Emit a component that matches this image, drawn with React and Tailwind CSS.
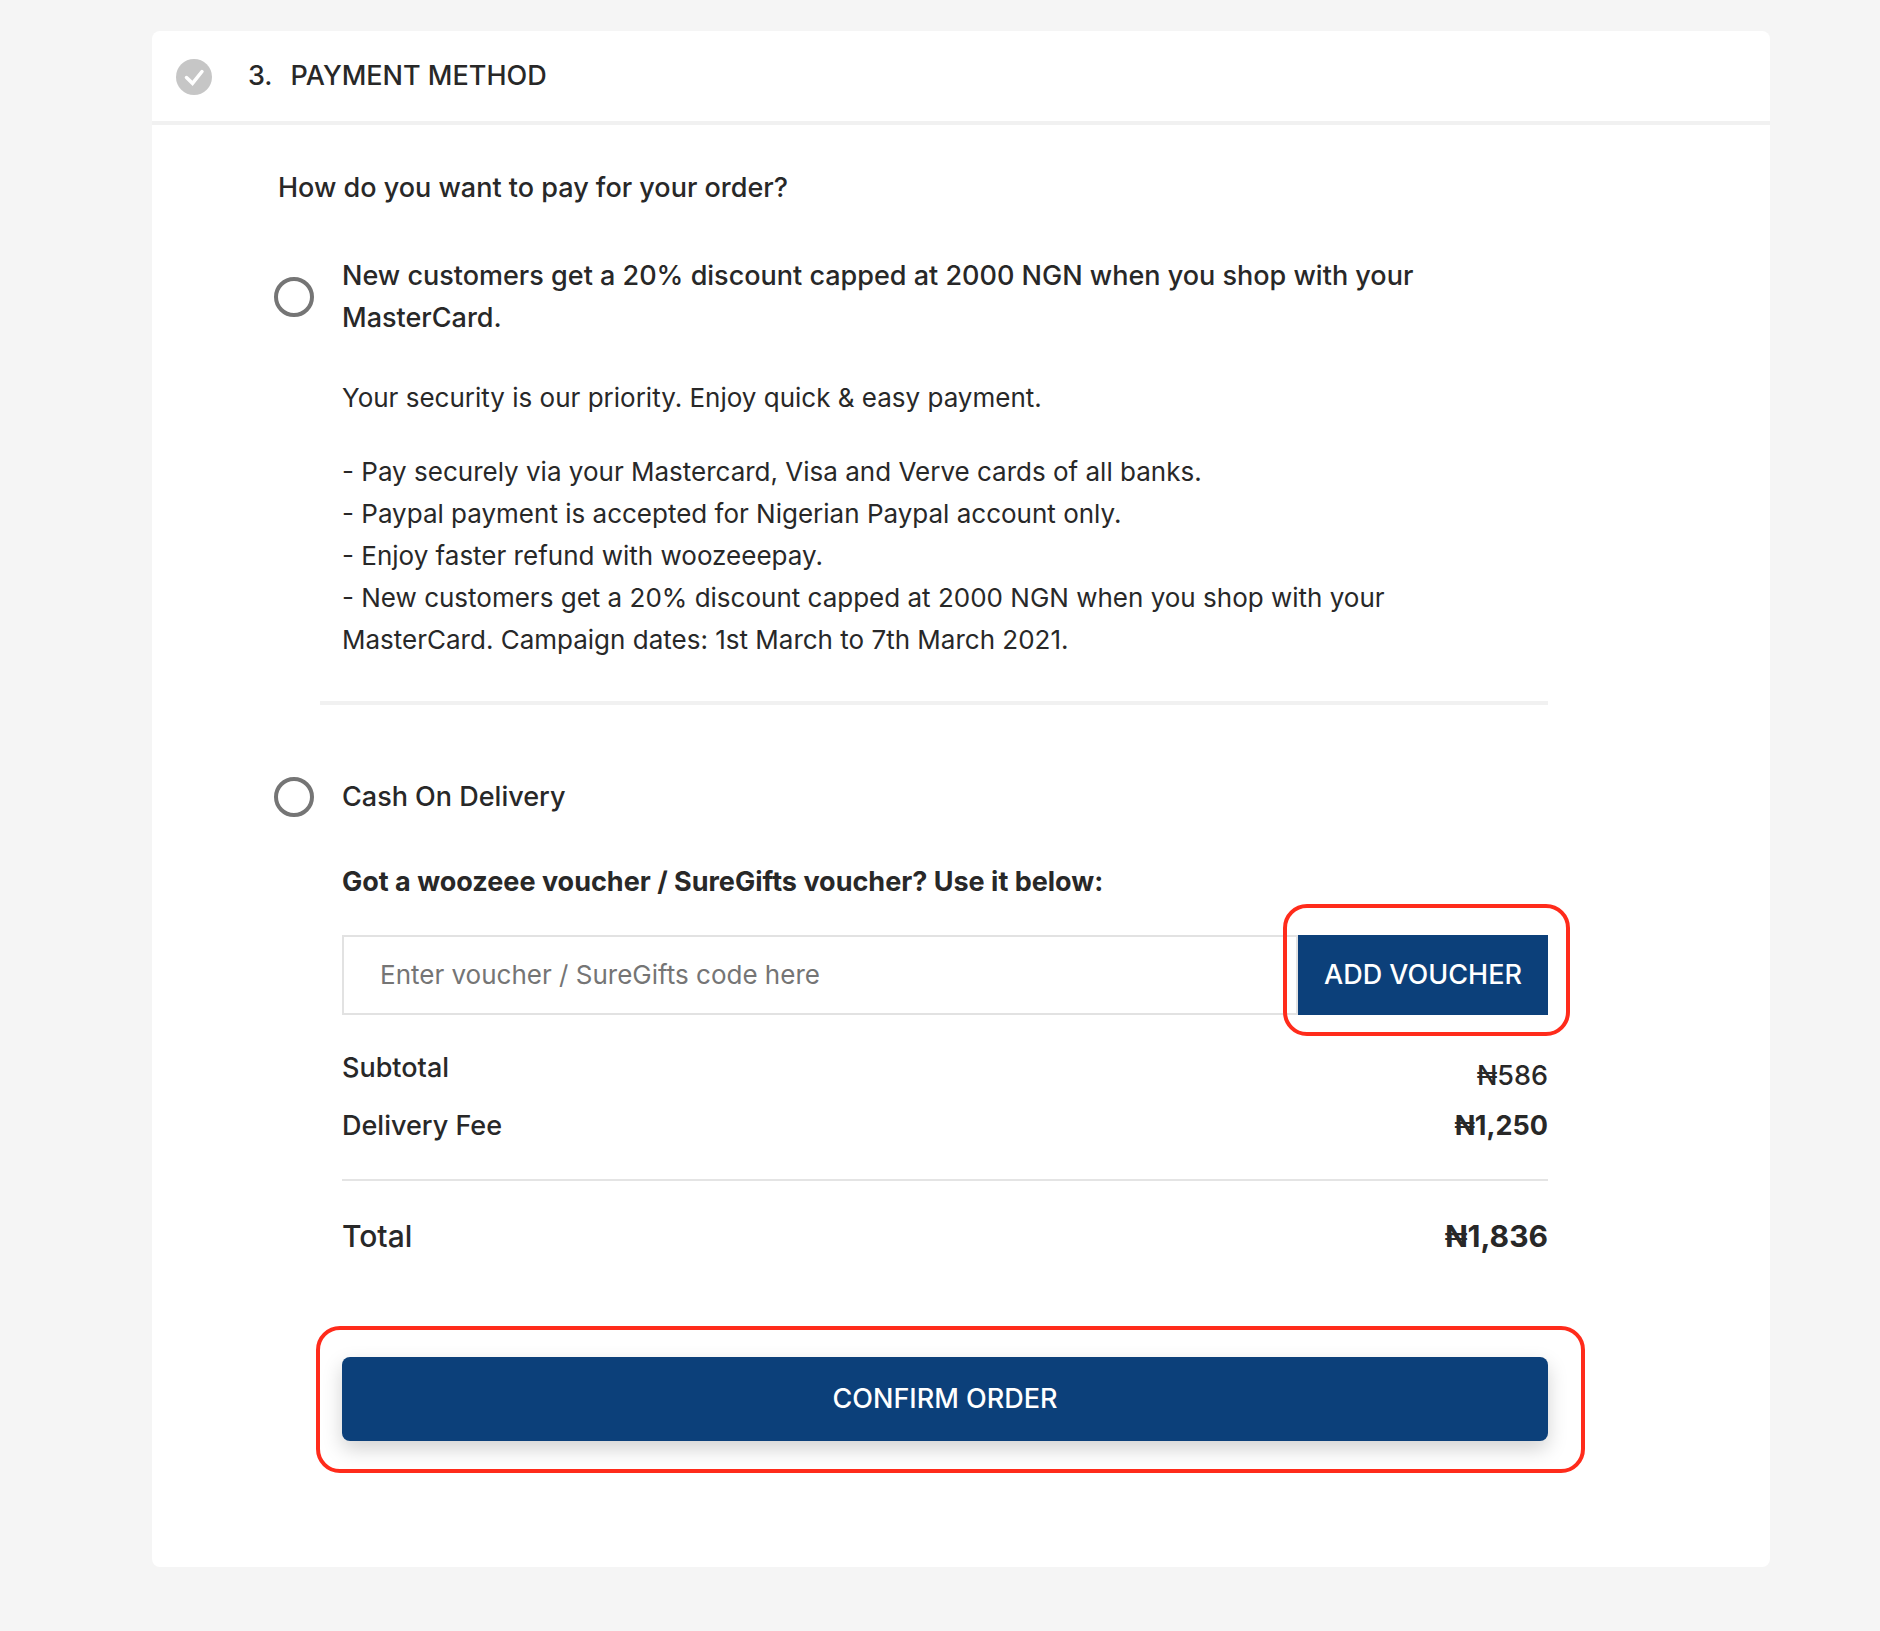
import React from "react";

const CARD_NOTES = [
  "- Pay securely via your Mastercard, Visa and Verve cards of all banks.",
  "- Paypal payment is accepted for Nigerian Paypal account only.",
  "- Enjoy faster refund with woozeeepay.",
  "- New customers get a 20% discount capped at 2000 NGN when you shop with your MasterCard. Campaign dates: 1st March to 7th March 2021.",
];

function CheckBadge() {
  return (
    <svg viewBox="0 0 36 36" className="size-9 shrink-0" aria-hidden="true">
      <circle cx="18" cy="18" r="18" fill="#c6c6c6" />
      <path
        d="M10.5 18.5l6 5.8L26 12.5"
        fill="none"
        stroke="#fff"
        strokeWidth="3.5"
        strokeLinecap="round"
      />
    </svg>
  );
}

function PaymentRadio({ id, value }) {
  return (
    <input
      type="radio"
      id={id}
      name="payment-method"
      value={value}
      className="size-10 appearance-none self-center rounded-full border-4 border-[#757575] bg-white checked:border-[#0c407a]"
    />
  );
}

function Highlight({ className }) {
  return (
    <span
      aria-hidden="true"
      className={`pointer-events-none absolute rounded-3xl border-4 border-[#ff2b1b] ${className}`}
    />
  );
}

export default function App() {
  return (
    <main className="min-h-screen bg-[#f5f5f5] pt-[31px] pr-[110px] pb-16 pl-[152px] font-['Inter',sans-serif] text-[27px] leading-[42px] text-[#282828]">
      <section className="rounded-lg bg-white">
        <header className="flex h-[94px] items-center border-b-4 border-[#f1f1f1] pt-px pl-6 font-medium">
          <CheckBadge />
          <h1 className="ml-9 flex gap-[18px] pb-px">
            <span>3.</span>
            <span>PAYMENT METHOD</span>
          </h1>
        </header>

        <form
          className="pt-[42px] pr-[222px] pb-[126px] pl-[122px]"
          onSubmit={(e) => e.preventDefault()}
        >
          <h2 className="pl-1 font-medium">How do you want to pay for your order?</h2>

          <div className="mt-[46px] grid grid-cols-[68px_1fr]">
            <PaymentRadio id="pay-card" value="card" />
            <label htmlFor="pay-card" className="pr-10 font-medium">
              New customers get a 20% discount capped at 2000 NGN when you shop with your
              MasterCard.
            </label>
            <div className="col-start-2 mt-[38px] pr-20 text-[26px]">
              <p>Your security is our priority. Enjoy quick &amp; easy payment.</p>
              <ul className="mt-8">
                {CARD_NOTES.map((note) => (
                  <li key={note}>{note}</li>
                ))}
              </ul>
            </div>
          </div>

          <hr className="mt-10 ml-[46px] border-t-4 border-[#f1f1f1]" />

          <div className="mt-[71px] grid grid-cols-[68px_1fr]">
            <PaymentRadio id="pay-cash" value="cash" />
            <label htmlFor="pay-cash" className="font-medium">
              Cash On Delivery
            </label>
          </div>

          <div className="pl-[68px]">
            <label htmlFor="voucher" className="mt-[43px] block font-bold">
              Got a woozeee voucher / SureGifts voucher? Use it below:
            </label>
            <div className="mt-8 flex h-20">
              <input
                id="voucher"
                type="text"
                placeholder="Enter voucher / SureGifts code here"
                className="min-w-0 flex-1 border-2 border-[#e2e2e2] px-9 text-[26px] placeholder:text-[#757575]"
              />
              <div className="relative w-[250px]">
                <button type="button" className="size-full bg-[#0c407a] font-medium text-white">
                  ADD VOUCHER
                </button>
                <Highlight className="-top-[31px] -right-[22px] -bottom-[21px] -left-[15px]" />
              </div>
            </div>

            <dl>
              <div className="mt-8 flex justify-between font-medium">
                <dt>Subtotal</dt>
                <dd className="pt-2">₦586</dd>
              </div>
              <div className="flex justify-between border-b-2 border-[#e4e4e4] pt-2 pb-8">
                <dt className="font-medium">Delivery Fee</dt>
                <dd className="font-bold">₦1,250</dd>
              </div>
              <div className="flex justify-between pt-8 text-[30px] leading-[46px]">
                <dt className="font-medium">Total</dt>
                <dd className="font-bold">₦1,836</dd>
              </div>
            </dl>

            <div className="relative mt-[98px]">
              <button
                type="submit"
                className="block h-[84px] w-full rounded-lg bg-[#0c407a] font-medium text-white shadow-[0_8px_20px_rgba(0,0,0,0.18)]"
              >
                CONFIRM ORDER
              </button>
              <Highlight className="-top-[31px] -right-[37px] -bottom-8 -left-[26px]" />
            </div>
          </div>
        </form>
      </section>
    </main>
  );
}
